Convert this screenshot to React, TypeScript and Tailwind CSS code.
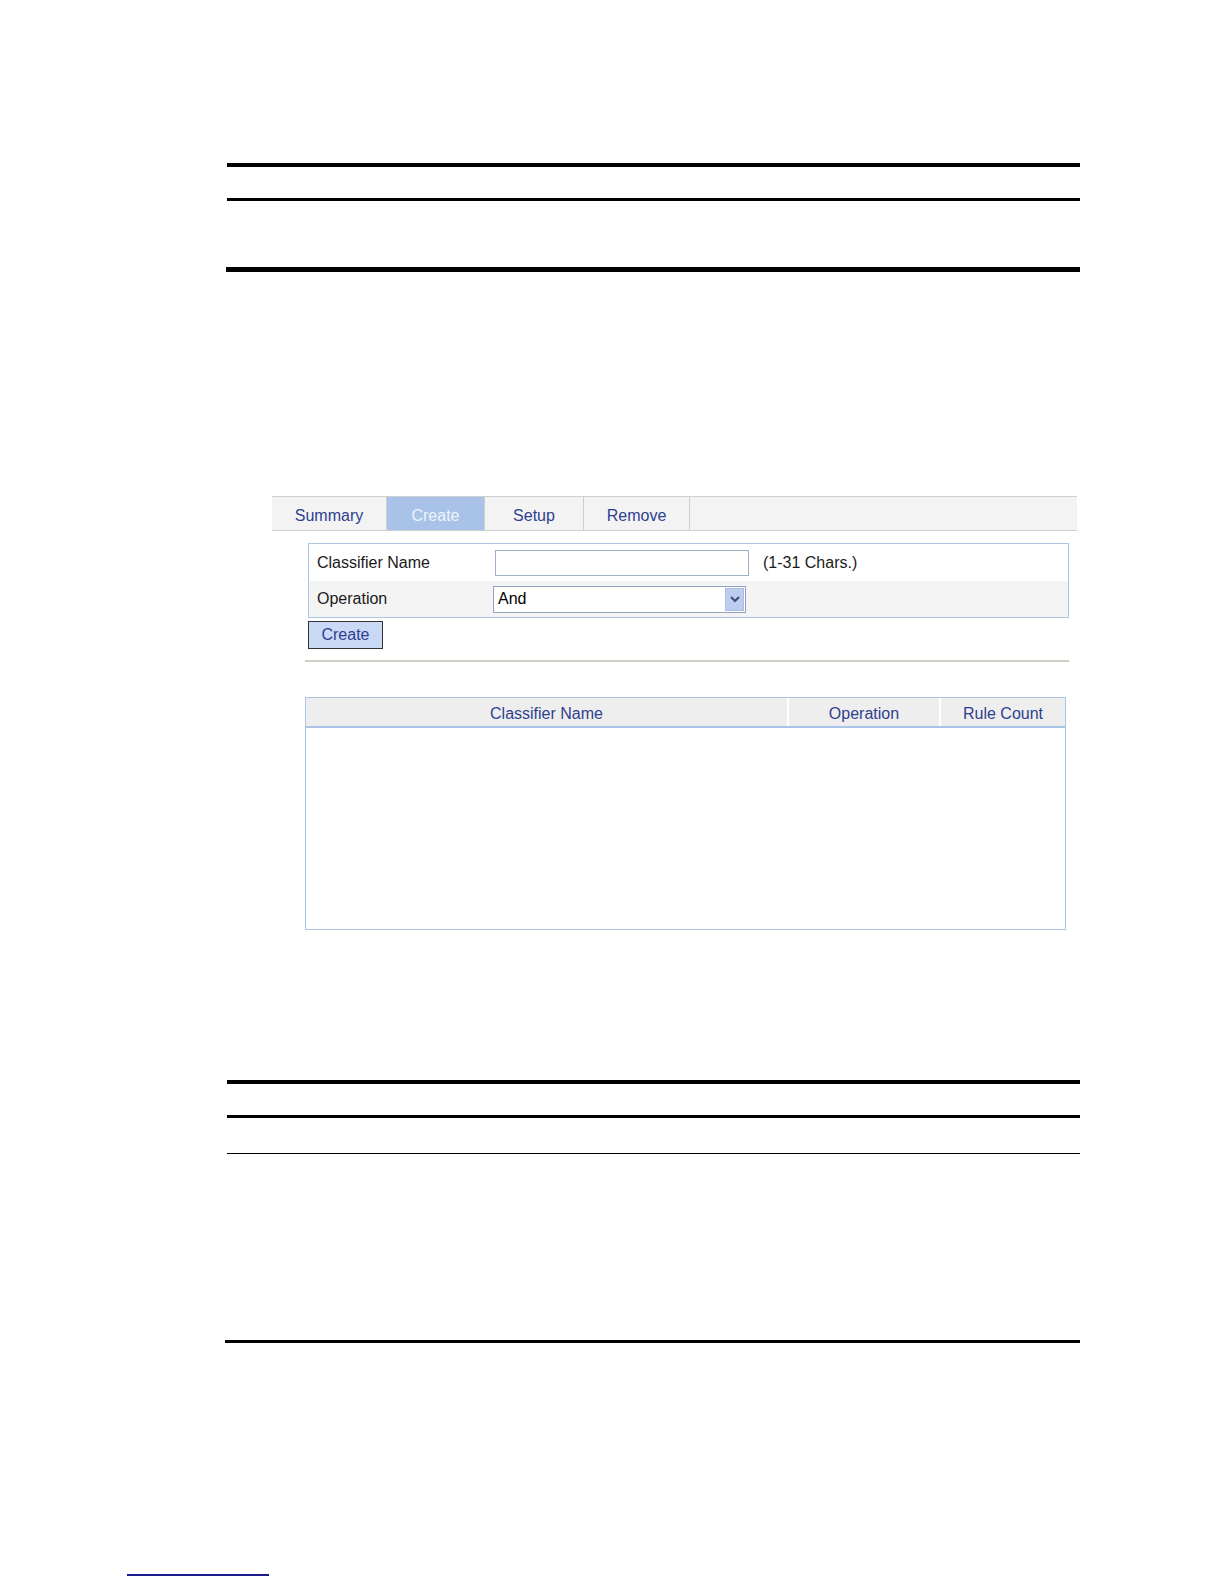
import React from "react";

export default function App() {
  const tabs = ["Summary", "Create", "Setup", "Remove"];
  const widths = ["w-[115px]", "w-[98px]", "w-[99px]", "w-[106px]"];
  return (
    <div className="w-[1224px] h-[1584px] bg-white relative overflow-hidden" style={{ fontFamily: '"Liberation Sans", Arial, sans-serif' }}>
      {/* top rules */}
      <div className="pt-[163px] pl-[227px] w-[1080px]">
        <div className="h-[4px] bg-black" />
        <div className="h-[3px] bg-black mt-[31px]" />
        <div className="h-[5px] bg-black mt-[66px] -ml-[1px]" />
      </div>

      {/* UI */}
      <div className="mt-[224px] ml-[272px] w-[805px]">
        {/* tabs */}
        <div className="flex h-[35px] bg-[#f3f3f3] border-t border-b border-[#cfcfcf]">
          {tabs.map((t, i) => (
            <div
              key={t}
              className={`${widths[i]} flex items-center justify-center text-[16px] border-r border-[#cfcfcf] pt-[5px] ${
                i === 1 ? "bg-[#a9c2e8] text-[#eef3fb]" : "text-[#2e3f8f]"
              }`}
            >
              {t}
            </div>
          ))}
        </div>

        <div className="ml-[36px] w-[761px]">
          {/* form */}
          <div className="mt-[12px] border border-[#aac6e4]">
            <div className="flex items-center h-[37px] bg-white">
              <div className="w-[186px] pl-[8px] text-[16px] text-[#1a1a1a]">Classifier Name</div>
              <div className="w-[254px] h-[26px] border border-[#9fb1c9] bg-white" />
              <div className="ml-[14px] text-[16px] text-[#1a1a1a]">(1-31 Chars.)</div>
            </div>
            <div className="flex items-center h-[36px] bg-[#f4f4f4]">
              <div className="w-[184px] pl-[8px] text-[16px] text-[#1a1a1a]">Operation</div>
              <div className="w-[253px] h-[27px] border border-[#8fa3c0] bg-white flex items-center justify-between">
                <span className="pl-[4px] text-[16px] text-black">And</span>
                <div className="w-[19px] h-[23px] mr-[1px] bg-[#bccdf0] border border-[#a8bde4] flex items-center justify-center">
                  <svg width="10" height="8" viewBox="0 0 10 8">
                    <path d="M1 2 L5 6 L9 2" fill="none" stroke="#3d4f7d" strokeWidth="2.2" />
                  </svg>
                </div>
              </div>
            </div>
          </div>

          {/* create button */}
          <div className="mt-[3px] w-[75px] h-[28px] bg-[#c9d8f4] border border-[#333] flex items-center justify-center text-[16px] text-[#2e3f8f]">
            Create
          </div>

          <div className="mt-[11px] -ml-[3px] h-[2px] bg-[#cfcfc6]" />

          {/* table */}
          <div className="mt-[35px] w-[761px] -ml-[3px] h-[233px] border border-[#aac6e4] flex flex-col">
            <div className="flex h-[30px] bg-[#eeeeee] border-b-2 border-[#a9c4e8] text-[16px] text-[#2e3f8f]">
              <div className="w-[483px] flex items-center justify-center border-r-2 border-white pt-[4px]">Classifier Name</div>
              <div className="w-[152px] flex items-center justify-center border-r-2 border-white pt-[4px]">Operation</div>
              <div className="flex-1 flex items-center justify-center pt-[4px]">Rule Count</div>
            </div>
            <div className="flex-1 bg-white" />
          </div>
        </div>
      </div>

      {/* bottom rules */}
      <div className="mt-[150px] pl-[227px] w-[1080px]">
        <div className="h-[4px] bg-black" />
        <div className="h-[3px] bg-black mt-[31px]" />
        <div className="h-[1px] bg-black mt-[35px]" />
        <div className="h-[3px] bg-black mt-[186px] -ml-[2px]" />
      </div>

      <div className="mt-[231px] ml-[127px] w-[142px] h-[2px] bg-[#1a1a8c]" />
    </div>
  );
}
